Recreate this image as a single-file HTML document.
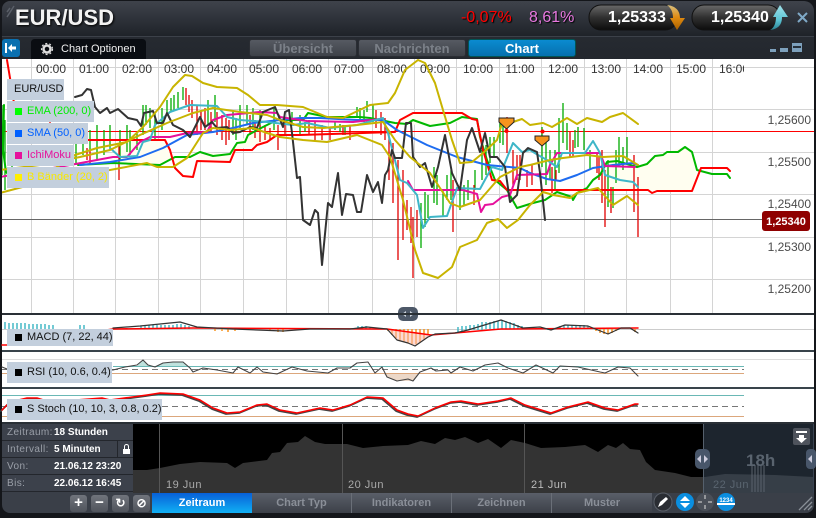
<!DOCTYPE html>
<html><head><meta charset="utf-8"><style>
html,body{margin:0;padding:0;background:#14161a}
#w{position:relative;width:816px;height:518px;overflow:hidden;background:#14161a;font-family:"Liberation Sans",sans-serif}
.a{position:absolute;white-space:nowrap}
.tab{position:absolute;top:39px;height:18px;line-height:18px;text-align:center;font-weight:bold;font-size:13px;color:#7b8088;background:linear-gradient(#565a62,#3e4249);border:1px solid #2a2d33;border-radius:3px;box-sizing:border-box;width:108px}
.lb{position:absolute;background:#c3cfdd;font-size:11px;height:21px;line-height:21px;left:7px;color:#111;white-space:nowrap}
.lb i{position:absolute;left:8px;top:7px;width:7px;height:7px}
.lb span{position:absolute;left:20px}
.row{position:absolute;left:2px;width:131px;height:17px;line-height:18px;background:#3c414b;border-bottom:1px solid #23262c;box-sizing:border-box;font-size:10px;color:#9a9fa8;letter-spacing:.4px}
.row b{position:absolute;left:52px;color:#fff;letter-spacing:0}
.row span{position:absolute;left:5px}
.bt{position:absolute;top:493px;height:20px;line-height:21px;width:100px;text-align:center;font-size:11px;font-weight:bold;color:#8a8f98;background:linear-gradient(#5a5f69,#3c4048);border-right:1px solid #6a6f78;box-sizing:border-box}
.sq{position:absolute;top:495px;width:17px;height:17px;border-radius:3px;background:linear-gradient(#70747c,#50545c);color:#fff;text-align:center;line-height:16px;font-size:15px;font-weight:bold}
polyline{stroke-linejoin:round;stroke-linecap:round}
</style></head><body><div id="w">
<div class="a" style="left:2px;top:1px;width:812px;height:60px;border-radius:8px 10px 0 0;background:linear-gradient(#3f434b 0,#2e323a 30%,#1f2329 58%,#262a31 60%,#23272d 100%)"></div>
<div class="a" style="left:2px;top:36px;width:812px;height:1px;background:#3c4149"></div>
<div class="a" style="left:2px;top:59px;width:812px;height:365px;background:#fff"></div>
<div class="a" style="left:2px;top:424px;width:812px;height:89px;border-radius:0 0 8px 8px;background:#3a3f48"></div>

<svg class="a" style="left:0;top:0" width="816" height="518" viewBox="0 0 816 518" fill="none">
<defs><clipPath id="c"><rect x="2" y="59" width="812" height="254"/></clipPath><clipPath id="t"><rect x="2" y="59" width="742" height="20"/></clipPath>
<linearGradient id="pl" x1="0" y1="0" x2="0" y2="1"><stop offset="0" stop-color="#6a6a6a"/><stop offset=".5" stop-color="#303030"/><stop offset="1" stop-color="#0c0c0c"/></linearGradient>
<linearGradient id="oa" x1="0" y1="0" x2="0" y2="1"><stop offset="0" stop-color="#d8c080"/><stop offset=".5" stop-color="#e08a10"/><stop offset="1" stop-color="#a86000"/></linearGradient>
<linearGradient id="ta" x1="0" y1="0" x2="0" y2="1"><stop offset="0" stop-color="#a0e0e8"/><stop offset=".6" stop-color="#5cc4d4"/><stop offset="1" stop-color="#2a8090"/></linearGradient>
</defs>
<!-- grid -->
<g stroke="#d4d4d4"><path d="M31.500 59V313M73.500 59V313M115.500 59V313M158.500 59V313M200.500 59V313M243.500 59V313M286.500 59V313M328.500 59V313M372.500 59V313M414.500 59V313M456.500 59V313M499.500 59V313M541.500 59V313M584.500 59V313M626.500 59V313M670.500 59V313M712.500 59V313"/>
<path d="M2 67.500H814M2 109.500H814M2 152.500H814M2 194.500H814M2 237.500H814M2 279.500H814"/></g>
<g clip-path="url(#t)" font-size="12" fill="#333" text-anchor="middle"><text x="51" y="73">00:00</text><text x="94" y="73">01:00</text><text x="137" y="73">02:00</text><text x="179" y="73">03:00</text><text x="222" y="73">04:00</text><text x="264" y="73">05:00</text><text x="307" y="73">06:00</text><text x="349" y="73">07:00</text><text x="392" y="73">08:00</text><text x="435" y="73">09:00</text><text x="478" y="73">10:00</text><text x="520" y="73">11:00</text><text x="563" y="73">12:00</text><text x="606" y="73">13:00</text><text x="648" y="73">14:00</text><text x="691" y="73">15:00</text><text x="734" y="73">16:00</text></g>
<g clip-path="url(#c)">
<path fill="#fffef0" d="M197 161L200 152L230 154L237 143L248 135L263 127L277 120L277 135L257 145L235 150L230 162ZM400 120L413 113L462 113L472 119L450 123L430 126L407 124ZM507 190L517 208L533 203L557 192ZM607 162L617 161L637 167L647 164L655 156L667 152L685 147L692 152L697 170L692 191L657 191L648 190L600 190ZM113 163L160 165L175 157L190 157L175 168L165 140L117 140Z"/>
<path d="M0 131.500H814" stroke="#f00" stroke-width="1"/><path d="M0 219.500H762" stroke="#666" stroke-width="1"/>
<path stroke="#00aa00" stroke-width="1.300" d="M2 105V175M5 120V190M12 150V185M76 140V165M83 130V155M90 130V150M97 125V160M104 130V155M110 125V150M120 130V160M127 125V152M130 130V155M137 133V150M143 105V135M146 105V125M150 108V128M155 112V140M162 108V130M167 100V115M171 98V112M174 95V110M178 92V108M183 87V100M208 100V125M215 95V122M233 110V135M236 118V140M240 105V128M247 105V125M253 108V130M260 110V128M274 108V130M292 112V125M300 115V135M305 122V132M335 122V130M340 124V132M345 125V135M357 107V117M360 108V122M364 110V122M367 101V112M373 105V122M425 192V227M421 203V248M428 195V218M434 167V203M437 175V205M443 190V217M447 175V200M451 170V200M460 190V210M464 185V205M468 180V200M475 170V190M482 150V180M486 145V175M490 137V163M494 137V158M500 123V143M503 125V145M542 127V167M546 140V185M550 150V180M555 150V190M559 118V173M563 103V143M567 123V150M575 130V148M578 127V147M584 128V150M590 150V170M608 160V207M613 187V208M616 150V183M619 137V167M623 147V170M627 137V163"/>
<path stroke="#e00000" stroke-width="1.300" d="M50 120V135M87 148V160M90 150V165M119 145V180M186 88V105M189 95V112M192 100V118M197 105V135M201 110V130M205 108V130M211 112V132M217 112V135M222 115V140M226 118V145M229 120V140M250 115V135M255 120V138M260 125V142M265 125V140M270 128V140M278 125V150M285 118V135M309 120V135M315 122V140M322 125V140M330 128V140M343 125V135M350 125V140M376 110V128M381 112V135M385 118V140M389 133V180M393 143V203M398 160V260M403 170V240M407 200V230M411 207V243M413 217V278M417 210V237M453 180V232M474 185V205M507 117V153M513 150V185M517 155V180M520 155V180M527 170V187M532 165V185M552 167V193M556 170V180M570 132V157M573 140V157M597 153V173M599 157V180M602 150V203M605 170V227M611 187V213M634 155V212M638 177V237"/>
<polyline stroke="#00b800" stroke-width="2" points="78,165 113,163 160,165 175,157 190,157 200,152 213,156 230,154 237,143 245,142 248,135 263,127 277,120 300,120 303,120 308,113 327,117 360,117 370,118 395,123 407,124 413,120 430,126 450,123 462,117 477,119 480,137 487,160 495,180 507,190 517,208 533,203 545,200 557,192 572,197 573,200 577,193 587,188 593,180 600,175 607,162 617,161 637,167 647,164 655,156 663,155 667,152 678,152 685,147 692,152 697,170 712,174 727,174 730,178"/>
<polyline stroke="#00b800" stroke-width="2" points="4,105 3,150 6,172 12,178"/>
<polyline stroke="#f00" stroke-width="2" points="7,60 12,90 15,110"/>
<polyline stroke="#f00" stroke-width="2" points="80,140 117,140 165,140 170,150 175,168 183,176 193,177 197,161 230,162 235,150 252,150 257,145 267,142 277,135 300,135 395,132 400,120 413,113 462,113 472,119 477,120 483,150 492,180 500,181 507,190 648,190 652,193 657,191 692,191 701,168 727,168 730,171"/>
<polyline stroke="#1e6cf0" stroke-width="2" points="80,165 110,162 140,157 163,148 187,135 213,132 233,128 253,123 280,120 300,118 320,118 357,120 383,120 397,130 427,145 457,157 487,165 520,168 530,173 547,179 560,181 577,175 593,168 613,165 633,163 638,165"/>
<polyline stroke="#e6109c" stroke-width="2" points="0,177 30,172 70,165 113,157 127,157 140,142 150,137 170,137 187,133 207,132 213,120 227,115 260,112 277,113 280,117 307,121 353,122 380,119"/>
<polyline stroke="#e6109c" stroke-width="2" points="408,181 413,190 463,190 477,194 481,212 485,205 493,204 502,197 510,195 517,175 547,174 550,165 557,153 600,153 605,166 635,167"/>
<polyline stroke="#3eb6c8" stroke-width="2" points="110,148 120,157 137,156 143,142 150,140 155,125 170,112 190,105 217,106 227,117 240,120 267,122 293,125 307,123 330,128 357,125 383,118 388,133 400,180 407,183 417,195 423,228 430,217 447,216 457,188 480,189 492,167 502,170 513,143 522,152 530,150 538,155 547,160 557,167 562,153 585,153 593,141 600,153 605,175 620,180 633,182 638,187"/>
<polyline stroke="#333" stroke-width="2" points="75,97 82,95 87,89 91,90 95,107 100,113 107,108 110,113 118,109 128,118 137,120 141,126 144,113 153,111 157,123 163,123 167,113 173,125 183,130 190,137 200,117 205,127 212,122 217,128 227,127 233,133 240,132 250,127 257,128 263,112 275,107 283,127 285,112 289,110 292,133 297,178 300,177 303,220 310,225 315,210 318,213 322,265 328,203 332,207 338,173 342,215 346,194 353,195 357,212 361,212 367,175 373,192 378,182 382,203 385,175 388,170 392,150 395,158 402,158 406,123 411,123 413,157 420,167 425,163 432,187 438,167 445,135 452,173 460,190 467,140 472,128 480,152 485,133 490,157 497,157 505,167 510,202 517,195 523,153 528,148 537,152 540,173 545,220"/>
<g stroke="#c8b400" stroke-width="2" style="stroke-linejoin:round"><polyline points="0,193 30,185 75,155 97,148 127,142 143,127 160,107 173,87 185,75 192,76 203,83 217,87 237,88 248,95 260,105 277,105 303,107 327,117 343,118 370,105 388,103 395,93 405,70 418,60 425,63 435,83 443,110 452,140 460,163 472,162 483,153 497,140 503,120 513,122 522,119 530,125 543,123 552,127 567,118 577,124 587,118 602,122 610,117 623,113 638,124"/>
<polyline points="0,170 40,165 80,157 110,150 140,135 167,123 193,113 213,108 240,112 267,115 280,120 303,127 323,128 357,125 383,122 395,140 410,157 430,173 450,203 460,207 480,200 500,177 520,167 530,165 550,160 563,158 587,155 603,157 623,156 638,165"/>
<polyline points="60,175 110,170 147,163 157,167 173,167 187,158 203,133 213,128 230,130 253,128 267,133 280,137 303,140 327,142 357,135 382,145 390,157 403,200 415,250 423,273 438,278 452,267 460,247 477,240 487,223 498,219 507,228 518,220 530,205 543,192 553,195 570,198 577,193 598,188 613,205 627,196 638,205"/></g>
<path d="M499 118H514V122L506.500 129L499 122Z" fill="#f7941d" stroke="#222" stroke-width="1"/><circle cx="506.500" cy="131" r="2" fill="#f00"/>
<path d="M535 136H549V140L542 146L535 140Z" fill="#f7941d" stroke="#222" stroke-width="1"/><circle cx="542.500" cy="131.500" r="2" fill="#f00"/>
</g>
<rect x="398" y="307" width="20" height="14" rx="5" fill="#4d5868"/><path d="M406 311L402 314L406 317ZM410 311L414 314L410 317Z" fill="#cfd6de"/>
<rect x="2" y="313" width="812" height="2" fill="#2a3036"/><rect x="2" y="350" width="812" height="2" fill="#39444b"/><rect x="2" y="387" width="812" height="2" fill="#39444b"/><rect x="2" y="422" width="812" height="2" fill="#2a3036"/>
<!-- MACD -->
<path d="M2 329.500H814" stroke="#ccc"/>
<path stroke="#45b8c6" stroke-width="1.500" d="M5 322V329M9 323V329M13 323V329M17 323V329M21 323V329M25 323V329M29 324V329M33 324V329M37 324V329M41 324V329M45 324V329M49 325V329M53 325V329M80 325V329M84 325V329M141 326V329M145 325V329M149 325V329M153 325V329M157 325V329M161 325V329M165 325V329M169 325V329M173 325V329M177 324V329M181 324V329M185 325V329M189 326V329M358 326V329M362 326V329M366 326V329M370 327V329M458 327V333M462 326V331M466 326V330M470 325V330M474 325V330M478 324V330M482 322V330M486 322V329M490 322V329M494 321V329M498 321V329M502 320V329M506 321V329M510 322V329M514 323V329M518 325V329M522 326V329M548 328V330M560 326V329M564 325V329M568 325V329M572 325V329M576 325V329M580 325V329M584 325V329M588 326V329"/>
<path stroke="#f7931e" stroke-width="1.500" d="M215 329V331M222 329V331M228 329V332M235 329V331M270 329V331M278 329V332M283 329V332M388 329V331M392 329V335M396 329V338M400 329V341M404 329V342M408 329V343M412 329V344M416 329V344M420 329V342M424 329V339M428 329V335M596 329V331M600 329V333M604 329V334M608 329V334M612 329V333M616 329V331M635 329V332"/>
<path fill="#f9b9b0" d="M388 329L397 340L415 346L428 337L431 335L388 329Z" opacity=".55"/>
<polyline stroke="#f00" stroke-width="1.500" points="2,345 7,345 113,329 193,328 387,329 431,335 455,333 501,329 638,328"/>
<polyline stroke="#333" stroke-width="1.200" points="113,328 140,326 180,322 197,327 233,329 283,331 310,329 350,329 367,327 387,329 397,340 408,343 415,346 428,337 435,334 455,333 468,330 501,320 523,328 540,327 551,330 565,325 588,326 608,334 621,328 630,328 638,333"/>
<!-- RSI -->
<path d="M2 359.500H814" stroke="#ddd"/><path d="M113 366.500H744" stroke="#6ab8b5"/><path d="M2 369.500H744" stroke="#777" stroke-dasharray="6 4"/><path d="M2 373.500H744" stroke="#dca77c"/>
<path fill="#bfe2dd" d="M137 366L143 360L148 365L150 366ZM155 366L163 363L183 362L188 366Z"/><path fill="#ecd8c8" d="M384 374L387 377L397 381L413 381L418 374Z"/>
<polyline stroke="#444" stroke-width="1.100" points="2,367 7,369 113,370 125,367 137,365 143,360 148,365 155,367 163,363 173,362 183,362 190,368 193,372 203,368 217,370 233,373 238,367 250,373 257,367 263,372 277,374 292,367 307,371 328,373 337,368 350,368 357,363 368,362 375,373 382,367 387,377 397,381 408,379 413,381 420,372 431,368 436,371 448,370 451,373 460,367 473,371 485,365 498,363 508,368 523,373 536,365 553,373 560,366 578,367 600,372 605,373 618,367 630,368 638,376"/>
<!-- Stoch -->
<path d="M2 395.500H744" stroke="#6ab8b5"/><path d="M2 406.500H744" stroke="#777" stroke-dasharray="6 4"/><path d="M2 416.500H744" stroke="#dca77c"/>
<polyline stroke="#444" stroke-width="1.800" transform="translate(-1 1)" points="2,410 10,402 27,398 37,398 50,402 102,398 110,400 147,395 160,393 183,394 200,400 213,408 227,413 240,412 257,405 267,404 280,410 297,413 320,408 333,410 350,405 367,397 383,398 397,410 408,414 418,416 435,408 451,402 461,401 478,404 498,401 511,398 525,405 551,413 568,407 588,402 605,408 618,410 635,404 638,404"/>
<polyline stroke="#f00" stroke-width="1.500" points="2,410 10,402 27,398 37,398 50,402 102,398 110,400 147,395 160,393 183,394 200,400 213,408 227,413 240,412 257,405 267,404 280,410 297,413 320,408 333,410 350,405 367,397 383,398 397,410 408,414 418,416 435,408 451,402 461,401 478,404 498,401 511,398 525,405 551,413 568,407 588,402 605,408 618,410 635,404 638,404"/>
<!-- navigator -->
<rect x="133" y="424" width="680" height="69" fill="#000"/>
<polygon fill="#333" points="133,470 147,470 160,468 180,464 200,462 227,463 235,468 243,463 267,460 272,453 280,452 287,443 298,442 305,436 315,442 325,444 347,444 363,448 383,446 408,445 421,441 435,444 445,438 455,440 465,437 478,443 488,439 501,448 511,440 525,443 541,448 565,447 585,445 598,452 608,445 616,448 623,443 630,449 640,450 646,462 655,470 675,473 691,477 705,477 725,474 775,475 813,477 813,493 133,493"/>
<path d="M159.500 424V493M342.500 424V493M524.500 424V493" stroke="#555"/>
<rect x="703" y="424" width="111" height="69" fill="#3a4a5c" opacity=".5"/>
<path d="M703.500 424V493" stroke="#55606c"/>
<path d="M752 465V492M755 465V492M758 465V492M761 465V492M764 465V492" stroke="#5a626c"/>
<rect x="695" y="449" width="15" height="20" rx="5" fill="#48566a"/><path d="M701 455L697 459L701 463ZM704 455L708 459L704 463Z" fill="#ccd"/>
<rect x="806" y="449" width="10" height="20" rx="4" fill="#48566a"/><path d="M812 455L808 459L812 463Z" fill="#ccd"/>
<rect x="793" y="428" width="17" height="17" rx="2" fill="#4e535c"/><path d="M796 431H807V433H796ZM799 435H804V438H807L801.500 443L796 438H799Z" fill="#fff"/>
<text x="166" y="488" font-size="11" fill="#aaa" letter-spacing=".5">19 Jun</text><text x="348" y="488" font-size="11" fill="#aaa" letter-spacing=".5">20 Jun</text><text x="531" y="488" font-size="11" fill="#bbb" letter-spacing=".5">21 Jun</text><text x="713" y="488" font-size="11" fill="#5a6570" letter-spacing=".5">22 Jun</text>
<text x="746" y="466" font-size="17" font-weight="bold" fill="#59636e">18h</text>
<!-- top right pills -->
<rect x="589" y="5" width="88" height="25" rx="12" fill="url(#pl)" stroke="#111"/>
<rect x="692" y="5" width="88" height="25" rx="12" fill="url(#pl)" stroke="#111"/>
<path d="M667 5C676 6 680 11 680 18H685L677 30L670 18H673C673 12 671 8 667 5Z" fill="url(#oa)"/>
<path d="M770 30C778 29 782 25 782 17H788L780 5L773 17H776C776 23 774 28 770 30Z" fill="url(#ta)"/>
<path d="M798 13L807 22M807 13L798 22" stroke="#7fa9c7" stroke-width="2"/>
<rect x="2" y="39" width="18" height="18" rx="3" fill="#0a70b0"/><path d="M6 43V53" stroke="#fff" stroke-width="2"/><path d="M8 48L12 44V46.500H16V49.500H12V52Z" fill="#fff"/>
<path d="M31 59V43Q31 39 35 39H142Q146 39 146 43V59Z" fill="#0a0d12"/>
<circle cx="47" cy="49" r="3.500" stroke="#ddd" stroke-width="2.500"/><circle cx="47" cy="49" r="5.500" stroke="#ddd" stroke-width="1.200" stroke-dasharray="2 2"/>
<path fill="#7da0bc" d="M770 49H776V52H770ZM780 48H788V52H780Z"/><rect x="792" y="43" width="10" height="9" fill="#7da0bc"/><rect x="793" y="46" width="8" height="2" fill="#26303a"/>
<!-- bottom right icons -->
<circle cx="663" cy="502" r="9" fill="#2a2d33" stroke="#5a5f68"/><path d="M658 507L660 502L666 497L668 499L662 505Z" fill="#fff"/>
<circle cx="685" cy="502" r="9" fill="#0a8ee0"/><path d="M685 496L680 501H690ZM685 508L680 503H690Z" fill="#fff"/>
<circle cx="705" cy="502" r="9" fill="#4a4f58"/><path d="M705 495V499M705 505V509M698 502H702M708 502H712" stroke="#ddd"/>
<circle cx="726" cy="502" r="9" fill="#0a8ee0"/><rect x="717" y="503" width="18" height="2" fill="#fff"/>
<text x="726" y="502" font-size="6" font-weight="bold" fill="#fff" text-anchor="middle">1234</text>
<path d="M799 510L812 497M804 510L812 502M808 510L812 506" stroke="#8a9098" stroke-width="1.300"/>
<path d="M7 17L14 6M7 12L10 8" stroke="#5a5f68" stroke-width="1.500"/>
<g font-size="12" fill="#4a4a4a" text-anchor="end"><text x="811" y="124">1,25600</text><text x="811" y="166">1,25500</text><text x="811" y="208">1,25400</text><text x="811" y="251">1,25300</text><text x="811" y="293">1,25200</text></g>
<rect x="762" y="211" width="48" height="20" rx="3" fill="#8f0000"/><text x="786" y="225" font-size="11" font-weight="bold" fill="#fff" text-anchor="middle">1,25340</text>
</svg>

<div class="a" style="left:15px;top:5px;font-size:22px;font-weight:bold;color:#f2f2f2;text-shadow:1px 1px 2px #000;line-height:26px">EUR/USD</div>
<div class="a" style="left:461px;top:8px;font-size:16px;color:#f00;text-shadow:1px 1px 1px #000;line-height:20px">-0,07%</div>
<div class="a" style="left:529px;top:8px;font-size:16px;color:#e878e0;text-shadow:1px 1px 1px #000;line-height:20px">8,61%</div>
<div class="a" style="left:608px;top:8px;font-size:16px;font-weight:bold;color:#fff;line-height:20px">1,25333</div>
<div class="a" style="left:711px;top:8px;font-size:16px;font-weight:bold;color:#fff;line-height:20px">1,25340</div>
<div class="a" style="left:61px;top:41px;font-size:11px;color:#eee;line-height:16px">Chart Optionen</div>
<div class="tab" style="left:249px">Übersicht</div>
<div class="tab" style="left:358px">Nachrichten</div>
<div class="tab" style="left:468px;background:linear-gradient(#0a8bd0,#0670ae);color:#fff;border-color:#055">Chart</div>

<div class="lb" style="top:79px;width:57px"><span style="left:7px">EUR/USD</span></div>
<div class="lb" style="top:101px;width:87px;color:#00ee00"><i style="background:#0f0"></i><span>EMA (200, 0)</span></div>
<div class="lb" style="top:123px;width:81px;color:#0060ff"><i style="background:#0060ff"></i><span>SMA (50, 0)</span></div>
<div class="lb" style="top:145px;width:67px;color:#e6109c"><i style="background:#e6109c"></i><span>IchiMoku</span></div>
<div class="lb" style="top:167px;width:102px;color:#f8e800"><i style="background:#fe0"></i><span>B Bänder (20, 2)</span></div>
<div class="lb" style="top:329px;width:106px;height:17px;line-height:17px"><i style="background:#000;top:5px"></i><span>MACD (7, 22, 44)</span></div>
<div class="lb" style="top:362px;width:105px"><i style="background:#000"></i><span>RSI (10, 0.6, 0.4)</span></div>
<div class="lb" style="top:399px;width:155px"><i style="background:#000"></i><span>S Stoch (10, 10, 3, 0.8, 0.2)</span></div>

<div class="row" style="top:424px"><span>Zeitraum:</span><b>18 Stunden</b></div>
<div class="row" style="top:441px"><span>Intervall:</span><b>5 Minuten</b><div class="a" style="left:115px;top:0;width:16px;height:16px;border-left:1px solid #23262c"><div class="a" style="left:5px;top:8px;width:7px;height:5px;background:#fff"></div><div class="a" style="left:6px;top:3px;width:3px;height:4px;border:1px solid #fff;border-bottom:0;border-radius:3px 3px 0 0"></div></div></div>
<div class="row" style="top:458px"><span>Von:</span><b>21.06.12 23:20</b></div>
<div class="row" style="top:475px"><span>Bis:</span><b>22.06.12 16:45</b></div>

<div class="sq" style="left:70px">+</div><div class="sq" style="left:91px">−</div><div class="sq" style="left:112px;font-size:12px">↻</div><div class="sq" style="left:133px;font-size:12px">⊘</div>
<div class="bt" style="left:152px;background:linear-gradient(#0860d8,#10b0f4);color:#fff;border:0">Zeitraum</div>
<div class="bt" style="left:252px">Chart Typ</div><div class="bt" style="left:352px">Indikatoren</div><div class="bt" style="left:452px">Zeichnen</div><div class="bt" style="left:552px;border:0">Muster</div>
</div></body></html>
